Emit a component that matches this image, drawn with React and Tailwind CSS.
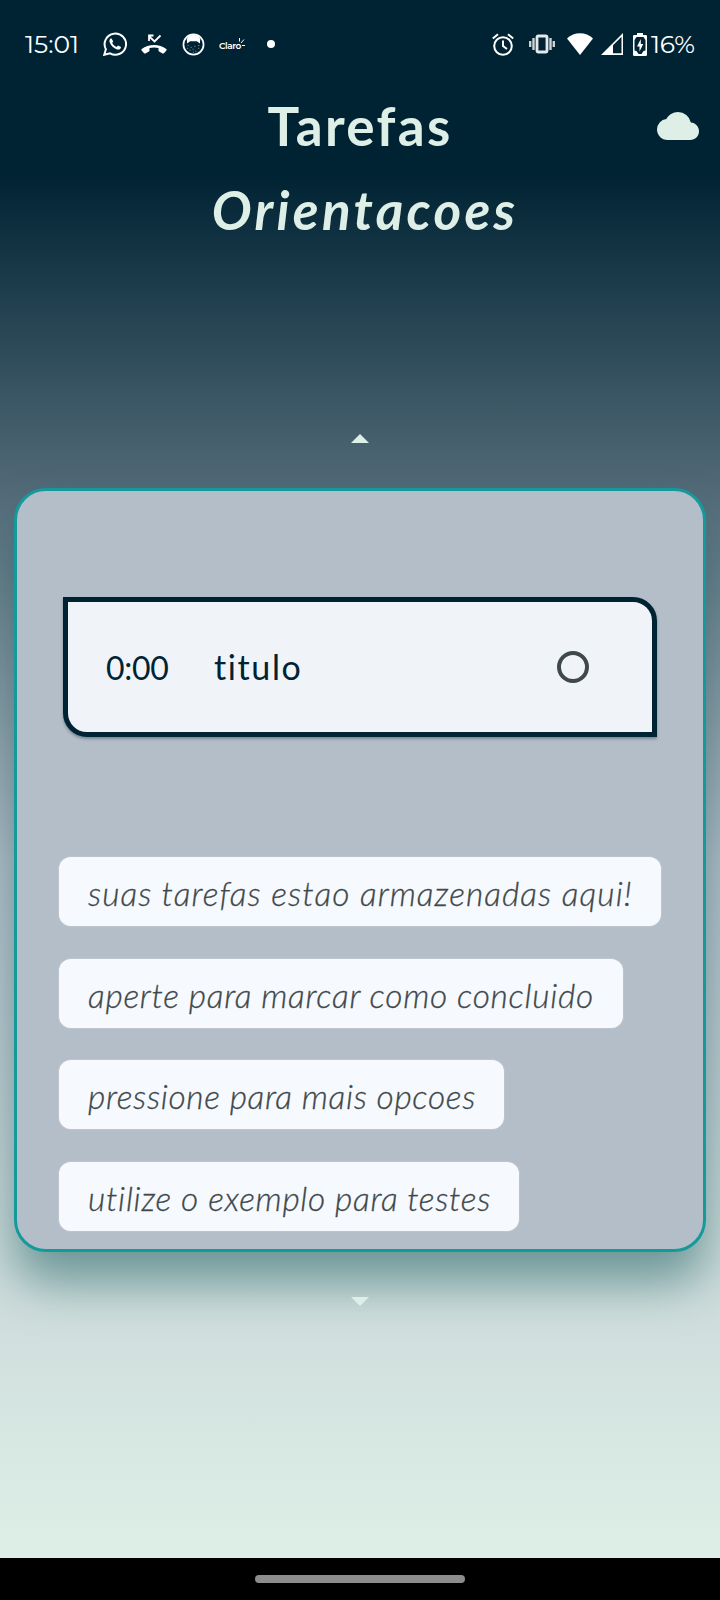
import React from "react";

const tips = [
  { text: "suas tarefas estao armazenadas aqui!", box: "w-[602px]", spacing: "tracking-[1.05px]" },
  { text: "aperte para marcar como concluido", box: "w-[564px]", spacing: "tracking-[0.7px]" },
  { text: "pressione para mais opcoes", box: "w-[445px]", spacing: "tracking-[0.65px]" },
  { text: "utilize o exemplo para testes", box: "w-[460px]", spacing: "tracking-[0.7px]" },
];

function StatusBar() {
  return (
    <header className="flex h-[88px] shrink-0 items-center justify-between pl-[25px] pr-[25px] font-['Montserrat','Lato',sans-serif] text-white">
      <div className="flex items-center">
        <span className="w-[78px] text-[25px] leading-none">15:01</span>
        <svg width="24" height="24" viewBox="0 0 24 24">
          <path d="M1.300 22.800l1.600-5.700A10.700 10.600 0 1 1 7 21.300z" fill="none" stroke="white" strokeWidth="2" />
          <path d="M8.300 6.200c-1.700.6-2.200 2.200-1.600 4 1.200 3.400 4 6.100 7.300 7.200 2.200.6 3.900-.5 4-2.500l-3-1.500-1.400 1.600c-2.100-.8-3.500-2.200-4.400-4.200l1.100-1.400z" fill="white" />
        </svg>
        <svg className="ml-[14px]" width="26" height="20" viewBox="0 0 26 20">
          <path d="M.7 15c7-5.200 17.600-5.200 24.600 0 .5.500.5 1 .1 1.400l-2.500 2.800c-.5.5-1.200.5-1.800.1l-3-1.900c-.4-.3-.6-.6-.6-1v-2.300c-3-.9-6-.9-9 0v2.300c0 .4-.2.700-.6 1l-3 1.900c-.6.4-1.300.4-1.800-.1L.6 16.400c-.4-.4-.4-.9.1-1.400z" fill="white" />
          <path d="M19.500 1.500L13.500 7.500 8.300 2.500M8 7V1.500h4.500" fill="none" stroke="white" strokeWidth="1.800" />
        </svg>
        <svg className="ml-[15px]" width="23" height="23" viewBox="0 0 24 24">
          <circle cx="12" cy="12" r="10.500" fill="none" stroke="white" strokeWidth="1.800" />
          <path d="M5 6C6.500 2.800 9 2 12 2s5.500.8 7 4l-.3 5-3.200-2.500h-7L5.300 11z" fill="white" />
          <path d="M6 13h1m2 2h1m3-1h1m3-1h1M8 18h1m2-1h1m2 2h1m2-3h1M5.500 16h1m5 4h1" stroke="white" strokeWidth="1" opacity=".6" />
        </svg>
        <span className="ml-[14px] flex w-[27px] items-end">
          <span className="text-[9px] font-semibold leading-[9px] tracking-[-0.400px]">Claro</span>
          <svg className="mb-[3px] ml-[-3px] shrink-0" width="8" height="9" viewBox="0 0 8 9" fill="none" stroke="white">
            <path d="M1.500 3.500V0M3 5l3-3.500M4 7.500h3" />
          </svg>
        </span>
        <i className="ml-[21px] h-2 w-2 rounded-full bg-white" />
      </div>
      <div className="flex items-center">
        <svg width="22" height="23" viewBox="0 0 22 23" fill="none" stroke="white" strokeWidth="2">
          <circle cx="11" cy="13" r="8.800" />
          <path d="M11 7.500V13l4 3M.8 5.500L6 1.200M21.200 5.500L16 1.200" />
        </svg>
        <svg className="ml-[15px]" width="26" height="20" viewBox="0 0 26 20" fill="none" stroke="white" strokeWidth="2.400">
          <rect x="8" y="2" width="10" height="16" rx="1.500" strokeWidth="2.800" opacity=".9" />
          <path d="M4.500 4v12M1.200 7v6M21.500 4v12M24.800 7v6" opacity=".8" />
        </svg>
        <svg className="ml-[12px]" width="26" height="22" viewBox="0 0 26 22">
          <path d="M0 5.500C7-1.500 19-1.500 26 5.500L13 22z" fill="white" />
        </svg>
        <svg className="ml-[8px]" width="22" height="22" viewBox="0 0 22 22">
          <path d="M0 22L22 0v22zM12 12.300V20.300h8.500V3.800z" fill="white" fillRule="evenodd" />
        </svg>
        <svg className="ml-[10px]" width="14" height="23" viewBox="0 0 14 23">
          <path d="M1.200 2H4V0h6v2h2.800Q14 2 14 3.200v18.600q0 1.200-1.200 1.200H1.200Q0 23 0 21.800V3.200Q0 2 1.200 2z" fill="white" />
          <path d="M3.500 4h7l2 3v10.500l-2 .5-2 3h-3l-2-3-2-.5V7z" fill="#002333" />
          <path d="M7.800 6L4 13.500h2.500v5L10.300 11H7.800z" fill="white" />
        </svg>
        <span className="ml-[4px] w-[44px] whitespace-nowrap text-[25px] leading-none tracking-[-0.300px]">16%</span>
      </div>
    </header>
  );
}

function TaskCard() {
  return (
    <div className="flex h-[140px] w-[594px] items-center rounded-bl-[24px] rounded-tr-[24px] border-5 border-[#002333] bg-[#f0f4f9] pl-[38px] pr-[63px] text-[#002333] shadow-[0_2px_3px_rgba(0,35,51,0.35)]">
      <span className="w-[108px] pt-[2px] text-[32px] leading-[38px] tracking-[-0.300px]">0:00</span>
      <span className="text-[34px] leading-[38px] tracking-[1.6px]">titulo</span>
      <span className="ml-auto h-8 w-8 rounded-full border-[4px] border-[#3f484a]" />
    </div>
  );
}

export default function App() {
  return (
    <main className="flex h-[1600px] w-[720px] flex-col overflow-hidden bg-[linear-gradient(to_bottom,#002333_175px,#b4bec9_860px,#deefe7_1558px)] font-['Lato',sans-serif]">
      <StatusBar />
      <div className="grid h-[76px] shrink-0 grid-cols-[1fr_auto_1fr] items-center text-[#deefe7]">
        <h1 className="col-start-2 -mt-[1px] text-[53px] font-bold leading-[76px] tracking-[2.300px]">Tarefas</h1>
        <svg className="mr-[21px] justify-self-end" width="42" height="42" viewBox="0 0 24 24" fill="currentColor">
          <path d="M19.350 10.040A7.490 7.490 0 0 0 12 4C9.110 4 6.600 5.640 5.350 8.040A5.994 5.994 0 0 0 0 14c0 3.310 2.690 6 6 6h13c2.760 0 5-2.240 5-5 0-2.640-2.050-4.780-4.650-4.960z" />
        </svg>
      </div>
      <h2 className="mt-[8px] shrink-0 pl-[10px] text-center text-[53px] font-bold italic leading-[76px] tracking-[3.300px] text-[#deefe7]">Orientacoes</h2>
      <svg className="mt-[186px] shrink-0 self-center text-[#deefe7]" width="18" height="9" viewBox="0 0 18 9" fill="currentColor">
        <path d="M0 9L9 0l9 9z" />
      </svg>
      <section className="mx-[14px] mt-[45px] flex h-[764px] shrink-0 flex-col items-center rounded-[32px] border-3 border-[#159a9c] bg-[#b4bec9] pt-[106px] shadow-[0_32px_48px_-2px_rgba(20,88,88,0.52)]">
        <TaskCard />
        <ul className="mt-[120px] flex flex-col gap-[32.500px] self-start pl-[42px] text-[#3f484a]">
          {tips.map((tip) => (
            <li key={tip.text} className={`${tip.box} flex h-[69px] items-center whitespace-nowrap rounded-[12px] bg-[#f6faff] pl-[29px] pt-[3px] text-[33.500px] font-light italic leading-[60px] [-webkit-text-stroke:0.3px_#3f484a] shadow-[0_0_2px_rgba(225,220,215,0.9)] ${tip.spacing}`}>
              {tip.text}
            </li>
          ))}
        </ul>
      </section>
      <svg className="mt-[45px] shrink-0 self-center text-[#deefe7]" width="18" height="9" viewBox="0 0 18 9" fill="currentColor">
        <path d="M0 0h18L9 9z" />
      </svg>
      <footer className="mt-auto flex h-[42px] shrink-0 items-center justify-center bg-black">
        <span className="h-2 w-[210px] rounded-full bg-[#8c8c8c]" />
      </footer>
    </main>
  );
}
